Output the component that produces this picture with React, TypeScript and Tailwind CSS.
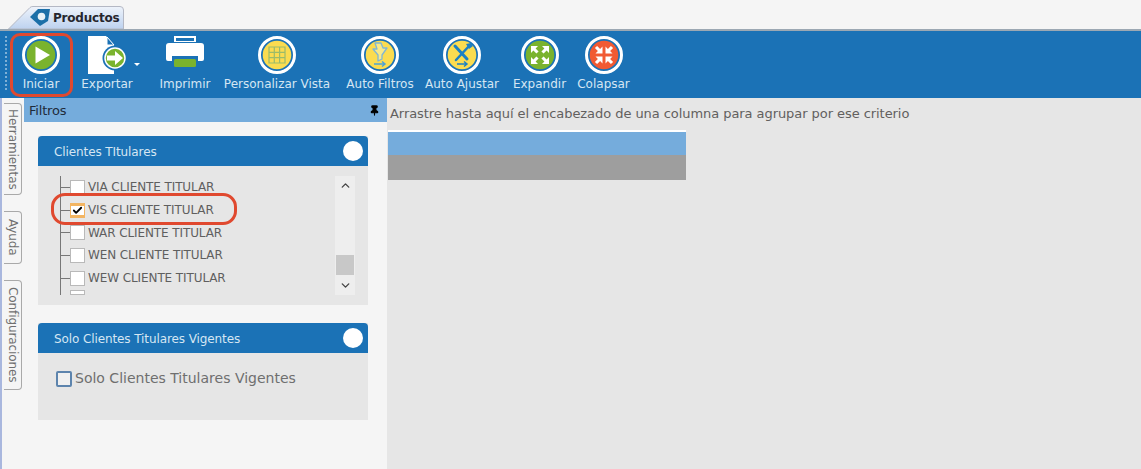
import React from 'react';
import { Check, ChevronDown, ChevronUp, Pin } from 'lucide-react';

const font = "font-['DejaVu_Sans',sans-serif]";

function Ring({ fill, children }: { fill: string; children?: React.ReactNode }) {
    return (
        <svg width="38" height="38" viewBox="0 0 38 38">
            <circle cx="19" cy="19" r="17.5" fill="none" stroke="#fff" strokeWidth="3" />
            <circle cx="19" cy="19" r="14.300" fill={fill} />
            {children}
        </svg>
    );
}

function ArrowsOut() {
    return (
        <g fill="#fff">
            <path d="M10 10h7l-2.400 2.400 3 3-2.200 2.200-3-3L10 17z" />
            <path d="M28 10v7l-2.400-2.400-3 3-2.200-2.200 3-3L21 10z" />
            <path d="M10 28v-7l2.400 2.400 3-3 2.200 2.200-3 3L17 28z" />
            <path d="M28 28h-7l2.400-2.400-3-3 2.200-2.200 3 3L28 21z" />
        </g>
    );
}

function ArrowsIn() {
    return (
        <g fill="#fff">
            <path d="M17.500 17.500h-7l2.400-2.400-3-3 2.200-2.200 3 3 2.400-2.400z" />
            <path d="M20.500 17.500v-7l2.400 2.400 3-3 2.200 2.200-3 3 2.400 2.400z" />
            <path d="M17.500 20.500v7l-2.400-2.400-3 3-2.200-2.200 3-3-2.400-2.400z" />
            <path d="M20.500 20.500h7l-2.400 2.400 3 3-2.200 2.200-3-3-2.400 2.400z" />
        </g>
    );
}

const tools = [
    {
        label: 'Iniciar',
        box: 'ml-[3px] w-[62px]',
        icon: (
            <Ring fill="#7ab32e">
                <path d="M13.500 10.500 28 19l-14.500 8.500z" fill="#fff" />
            </Ring>
        ),
    },
    {
        label: 'Exportar',
        box: 'ml-[2px] w-[66px]',
        icon: (
            <svg width="42" height="40" viewBox="0 0 42 40">
                <path d="M2 0h18l8 9v29H2z" fill="#fff" />
                <path d="M21 1l7 8h-7z" fill="#1b72b6" stroke="#fff" strokeWidth="1" />
                <circle cx="29" cy="22" r="12.500" fill="#1b72b6" />
                <circle cx="29" cy="22" r="10" fill="#7ab32e" stroke="#fff" strokeWidth="1.500" />
                <path d="M21 19.500h8V15l8 7-8 7v-4.500h-8z" fill="#fff" />
            </svg>
        ),
    },
    {
        label: 'Imprimir',
        box: 'ml-[19px] w-[52px]',
        icon: (
            <svg width="40" height="34" viewBox="0 0 40 34" className="mt-[-1px]">
                <path d="M9 1h22v6H9z" fill="#fff" />
                <rect x="11" y="3" width="18" height="3" fill="#1b72b6" />
                <path d="M4 8h32a3 3 0 0 1 3 3v13a2 2 0 0 1-2 2h-4v-5H7v5H3a2 2 0 0 1-2-2V11a3 3 0 0 1 3-3z" fill="#fff" />
                <rect x="9" y="24" width="22" height="8" rx="1.500" fill="#7ab32e" />
            </svg>
        ),
    },
    {
        label: 'Personalizar Vista',
        box: 'ml-[12px] w-[108px]',
        icon: (
            <Ring fill="#fbdc50">
                <path d="M11 11h16v16H11zM16.300 11v16M21.600 11v16M11 16.300h16M11 21.600h16" fill="none" stroke="#9bbb6a" strokeWidth="1.200" />
            </Ring>
        ),
    },
    {
        label: 'Auto Filtros',
        box: 'ml-[14px] w-[70px]',
        icon: (
            <Ring fill="#fbdc50">
                <path d="M14 7h6l2 5h4l-5 7v4l-4 2v-6l-5-6h4z" fill="#f7e98a" stroke="#7fb6d6" strokeWidth="1.300" strokeLinejoin="round" />
                <path d="M13 28h11m-3-2.500 3 2.500-3 2.500" fill="none" stroke="#4ea3d4" strokeWidth="1.500" />
            </Ring>
        ),
    },
    {
        label: 'Auto Ajustar',
        box: 'ml-[10px] w-[74px]',
        icon: (
            <Ring fill="#fbdc50">
                <path d="M12 10l12 13" stroke="#1b80c4" strokeWidth="3" strokeLinecap="round" />
                <path d="M27 9 13 24" stroke="#1b80c4" strokeWidth="2.500" strokeLinecap="round" />
                <path d="M23 8l5-1 2 3-4 3z" fill="#1b80c4" />
                <path d="M14 28h10m-3-2.500 3 2.500-3 2.500" fill="none" stroke="#1b80c4" strokeWidth="1.500" />
            </Ring>
        ),
    },
    { label: 'Expandir', box: 'ml-[14px] w-[53px]', icon: <Ring fill="#7ab32e"><ArrowsOut /></Ring> },
    { label: 'Colapsar', box: 'ml-[12px] w-[51px]', icon: <Ring fill="#f15a33"><ArrowsIn /></Ring> },
];

const clientes = [
    { name: 'VIA CLIENTE TITULAR', checked: false },
    { name: 'VIS CLIENTE TITULAR', checked: true },
    { name: 'WAR CLIENTE TITULAR', checked: false },
    { name: 'WEN CLIENTE TITULAR', checked: false },
    { name: 'WEW CLIENTE TITULAR', checked: false },
];

function CardHeader({ title }: { title: string }) {
    return (
        <div className="h-[30px] bg-[#1b72b6] rounded-t-[4px] flex items-center justify-between pl-4 pr-[5px]">
            <span className="mt-[2px] text-[12px] text-[#d5e6f3] tracking-[-0.1px]">{title}</span>
            <div className="w-5 h-5 rounded-full bg-white" />
        </div>
    );
}

function SideTab({ label, height }: { label: string; height: string }) {
    return (
        <div className={`${height} w-[18px] bg-[#f5f5f5] border border-l-0 border-[#a9a9a9] rounded-br-[4px] rounded-tr-[4px] flex items-center justify-start`}>
            <span className="[writing-mode:vertical-rl] text-[12px] text-[#6f6f6f] tracking-[-0.1px]">{label}</span>
        </div>
    );
}

export default function App() {
    return (
        <div className={`relative w-[1141px] h-[469px] overflow-hidden bg-[#f5f5f5] ${font}`}>
            {/* tab strip */}
            <div className="h-[29px] pt-[6px] pl-[30px] flex items-end">
                <div className="relative h-[23px] w-[94px] flex items-center gap-[2px]">
                    <svg width="116" height="23" viewBox="0 0 116 23" className="absolute left-[-22px] top-0">
                        <defs>
                            <linearGradient id="tabFill" x1="0" y1="0" x2="0" y2="1">
                                <stop offset="0" stopColor="#eef3fb" />
                                <stop offset="1" stopColor="#bdd2ef" />
                            </linearGradient>
                        </defs>
                        <path d="M0.500 23 22 1.500Q23 0.500 25 0.500H112Q115.500 0.500 115.500 4V23z" fill="url(#tabFill)" stroke="#b4b8c4" />
                    </svg>
                    <svg width="21" height="19" viewBox="0 0 21 19" className="relative">
                        <path d="M0 9 8 1h12l-2 12-8 5z" fill="#1b6fa8" />
                        <circle cx="11.500" cy="8.500" r="3.800" fill="#e8f2f8" />
                    </svg>
                    <span className="relative text-[12px] font-bold text-[#26262e] tracking-[-0.2px]">Productos</span>
                </div>
            </div>

            {/* toolbar */}
            <div className="h-[69px] bg-[#1b72b6] border-t-2 border-[#9ca8b3] flex">
                <div className="ml-[5px] mt-[5px] h-[54px] w-0 border-l-2 border-dotted border-[#7fb0d6]" />
                {tools.map((t) => (
                    <div key={t.label} className={`${t.box} relative shrink-0 flex flex-col items-center`}>
                        <div className="h-[46px] pt-[5px] flex items-start justify-center">{t.icon}</div>
                        <span className="text-[12px] leading-[14px] whitespace-nowrap text-[#d5e6f3]">{t.label}</span>
                        {t.label === 'Exportar' && (
                            <div className="absolute left-[60px] top-[32px] w-0 h-0 border-x-[3px] border-t-[3px] border-x-transparent border-t-white" />
                        )}
                    </div>
                ))}
            </div>

            {/* body */}
            <div className="flex h-[371px]">
                <div className="w-[24px] shrink-0 border-l-2 border-[#a9b7de] flex flex-col gap-[16px] pt-[5px] pl-[2px] bg-[#f5f5f5]">
                    <SideTab label="Herramientas" height="h-[92px]" />
                    <SideTab label="Ayuda" height="h-[53px]" />
                    <SideTab label="Configuraciones" height="h-[110px]" />
                </div>

                <div className="w-[363px] shrink-0 flex flex-col">
                    <div className="h-[24px] bg-[#75acdc] flex items-center justify-between pl-[5px] pr-[7px]">
                        <span className="mt-[2px] text-[13px] text-[#1f2b3a] tracking-[-0.2px]">Filtros</span>
                        <Pin className="w-[11px] h-[11px] text-black" fill="black" strokeWidth={2.500} />
                    </div>
                    <div className="pl-[14px] pr-[19px] pt-[14px] flex flex-col gap-[18px]">
                        <div className="h-[169px] bg-[#e6e6e6]">
                            <CardHeader title="Clientes TItulares" />
                            <div className="relative flex h-[139px] pt-[10px]">
                                <div className="w-[297px] h-[119px] overflow-hidden pl-[22px] relative">
                                    <div className="absolute left-[22px] top-0 h-[119px] w-px bg-[#777]" />
                                    {clientes.map((c) => (
                                        <div key={c.name} className="h-[22.700px] flex items-center">
                                            <div className="w-[10px] h-px bg-[#777] shrink-0" />
                                            <div className={`w-[15px] h-[15px] shrink-0 bg-white border flex items-center justify-center ${c.checked ? 'border-[#f3b562] border-y-[3px]' : 'border-[#b9b9b9]'}`}>
                                                {c.checked && <Check className="w-[11px] h-[11px] text-black" strokeWidth={4} />}
                                            </div>
                                            <span className="ml-[3px] text-[12px] text-[#5f5f5f] whitespace-nowrap tracking-[-0.1px]">{c.name}</span>
                                        </div>
                                    ))}
                                    <div className="ml-[10px] w-[15px] h-[5px] bg-white border border-[#b9b9b9] mt-[1px]" />
                                </div>
                                <div className="w-[20px] h-[119px] bg-[#eeeeee] flex flex-col items-center justify-between py-[3px]">
                                    <ChevronUp className="w-[13px] h-[13px] text-[#444]" strokeWidth={2.500} />
                                    <div className="flex flex-col items-center gap-[4px]">
                                        <div className="w-[18px] h-[20px] bg-[#c8c8c8]" />
                                        <ChevronDown className="w-[13px] h-[13px] text-[#444]" strokeWidth={2.500} />
                                    </div>
                                </div>
                            </div>
                        </div>

                        <div className="h-[97px] bg-[#e6e6e6]">
                            <CardHeader title="Solo Clientes Titulares Vigentes" />
                            <div className="flex items-center pl-[18px] pt-[15px]">
                                <div className="w-[16px] h-[16px] border-2 border-[#5d84ad] rounded-[2px] bg-[#f0f0f0]" />
                                <span className="ml-[3px] text-[14px] text-[#6f6f6f]">Solo Clientes Titulares Vigentes</span>
                            </div>
                        </div>
                    </div>
                </div>

                <div className="flex-1 bg-[#e6e6e6] pl-px">
                    <div className="h-[32px] flex items-center pl-[2px]">
                        <span className="text-[13px] text-[#62605e] tracking-[-0.06px] whitespace-nowrap">Arrastre hasta aquí el encabezado de una columna para agrupar por ese criterio</span>
                    </div>
                    <div className="w-[298px] border-t-2 border-white">
                        <div className="h-[23px] bg-[#75acdc]" />
                        <div className="h-[25px] bg-[#9e9e9e]" />
                    </div>
                </div>
            </div>

            {/* red highlights */}
            <div className="absolute left-[10px] top-[33px] w-[63px] h-[64px] border-[3px] border-[#e0492f] rounded-[10px]" />
            <div className="absolute left-[51px] top-[193px] w-[186px] h-[32px] border-[3px] border-[#e0492f] rounded-[14px]" />
        </div>
    );
}
